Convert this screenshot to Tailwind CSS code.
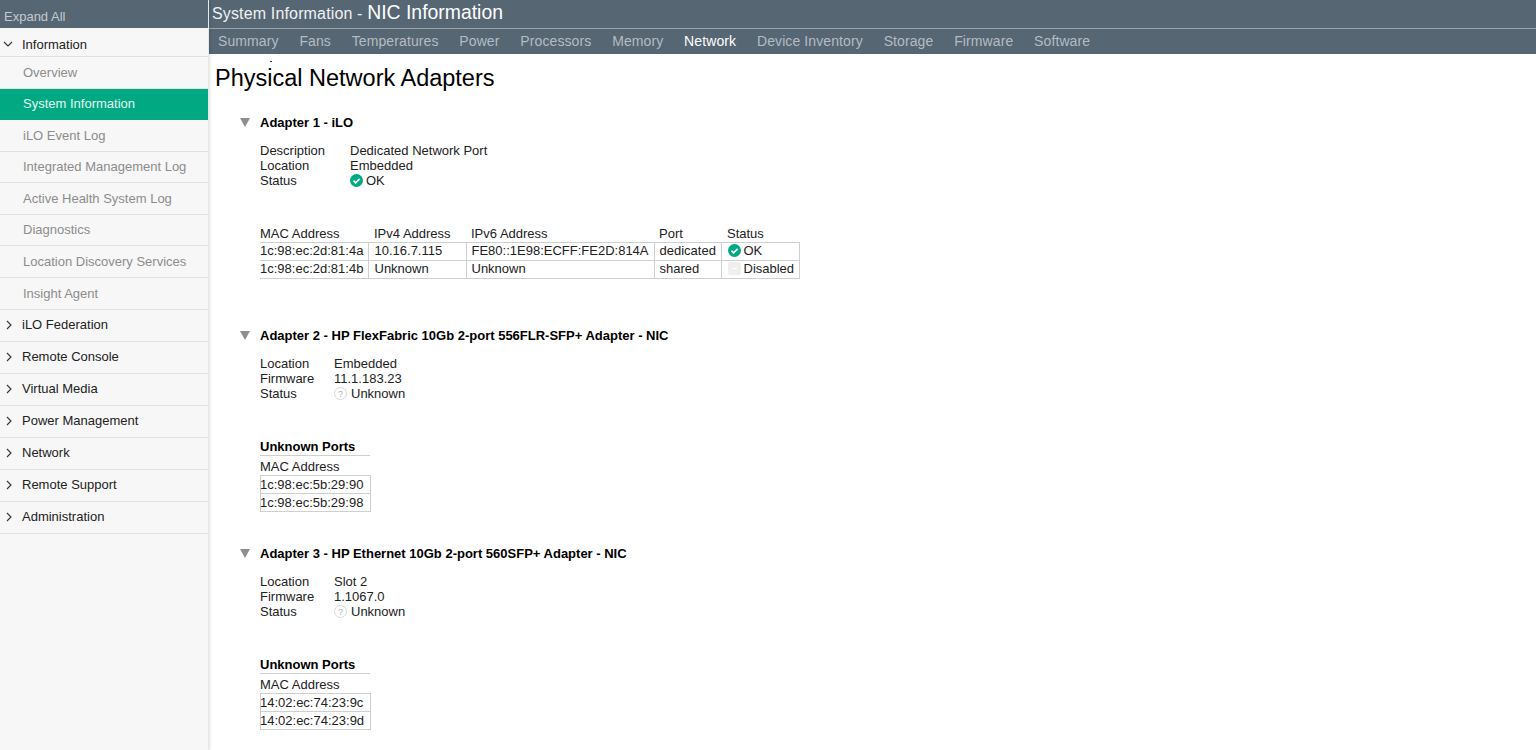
<!DOCTYPE html>
<html lang="en">
<head>
  <meta charset="UTF-8">
  <title>System Information - NIC Information</title>
  <script src="https://cdn.jsdelivr.net/npm/@tailwindcss/browser@4"></script>
</head>
<body class="bg-white text-black font-['Liberation_Sans',Arial,sans-serif] overflow-hidden">
  <div class="flex h-[750px]">
    <!-- left nav -->
    <aside class="w-[209px] shrink-0 bg-[#f7f7f7] border-r border-[#e8e8e8] shadow-[1px_0_3px_rgba(0,0,0,0.12)] z-10 text-[13px] leading-[15px]">
      <div class="h-[28px] bg-[#566673] text-[#c4cacf] pl-[4px] pt-[9px]">Expand All</div>
      <div class="h-[28px] mt-px pt-[3px] box-border border-b border-[#e0e0e0] flex items-center text-[#222]">
        <svg class="w-[22px] shrink-0" height="10" viewBox="0 0 22 10"><path d="M4 3l4 4 4-4" fill="none" stroke="#333" stroke-width="1.1"/></svg>
        <span>Information</span>
      </div>
      <div class="h-[32px] pl-[23px] pb-px flex items-center border-b border-[#e0e0e0] text-[#8c8c8c]">Overview</div>
      <div class="h-[31px] pl-[23px] pb-[2px] flex items-center bg-[#01a982] text-[#e6f6f2]">System Information</div>
      <div class="h-[32px] pl-[23px] pb-px flex items-center border-b border-[#e0e0e0] text-[#8c8c8c]">iLO Event Log</div>
      <div class="h-[31px] pl-[23px] pb-px flex items-center border-b border-[#e0e0e0] text-[#8c8c8c]">Integrated Management Log</div>
      <div class="h-[32px] pl-[23px] pb-px flex items-center border-b border-[#e0e0e0] text-[#8c8c8c]">Active Health System Log</div>
      <div class="h-[31px] pl-[23px] pb-px flex items-center border-b border-[#e0e0e0] text-[#8c8c8c]">Diagnostics</div>
      <div class="h-[32px] pl-[23px] pb-px flex items-center border-b border-[#e0e0e0] text-[#8c8c8c]">Location Discovery Services</div>
      <div class="h-[32px] pl-[23px] pb-px flex items-center border-b border-[#e0e0e0] text-[#8c8c8c]">Insight Agent</div>
      <div class="h-[32px] pb-[2px] flex items-center border-b border-[#e0e0e0] text-[#222]"><svg class="w-[22px] shrink-0" height="12" viewBox="0 0 22 12"><path d="M7 2l4 4-4 4" fill="none" stroke="#333" stroke-width="1.1"/></svg><span>iLO Federation</span></div>
      <div class="h-[32px] pb-[2px] flex items-center border-b border-[#e0e0e0] text-[#222]"><svg class="w-[22px] shrink-0" height="12" viewBox="0 0 22 12"><path d="M7 2l4 4-4 4" fill="none" stroke="#333" stroke-width="1.1"/></svg><span>Remote Console</span></div>
      <div class="h-[32px] pb-[2px] flex items-center border-b border-[#e0e0e0] text-[#222]"><svg class="w-[22px] shrink-0" height="12" viewBox="0 0 22 12"><path d="M7 2l4 4-4 4" fill="none" stroke="#333" stroke-width="1.1"/></svg><span>Virtual Media</span></div>
      <div class="h-[32px] pb-[2px] flex items-center border-b border-[#e0e0e0] text-[#222]"><svg class="w-[22px] shrink-0" height="12" viewBox="0 0 22 12"><path d="M7 2l4 4-4 4" fill="none" stroke="#333" stroke-width="1.1"/></svg><span>Power Management</span></div>
      <div class="h-[32px] pb-[2px] flex items-center border-b border-[#e0e0e0] text-[#222]"><svg class="w-[22px] shrink-0" height="12" viewBox="0 0 22 12"><path d="M7 2l4 4-4 4" fill="none" stroke="#333" stroke-width="1.1"/></svg><span>Network</span></div>
      <div class="h-[32px] pb-[2px] flex items-center border-b border-[#e0e0e0] text-[#222]"><svg class="w-[22px] shrink-0" height="12" viewBox="0 0 22 12"><path d="M7 2l4 4-4 4" fill="none" stroke="#333" stroke-width="1.1"/></svg><span>Remote Support</span></div>
      <div class="h-[32px] pb-[2px] flex items-center border-b border-[#e0e0e0] text-[#222]"><svg class="w-[22px] shrink-0" height="12" viewBox="0 0 22 12"><path d="M7 2l4 4-4 4" fill="none" stroke="#333" stroke-width="1.1"/></svg><span>Administration</span></div>
    </aside>

    <main class="flex-1 min-w-0">
      <div class="h-[28px] bg-[#566673] border-b border-[#9aa3aa] box-content text-white pl-[3px] flex items-center">
        <span class="text-[16px] tracking-[0.15px] text-[#f0f2f3]">System Information -&nbsp;</span><span class="text-[19.4px] mb-[3px]">NIC Information</span>
      </div>
      <nav class="h-[25px] bg-[#566673] pl-[9px] flex items-center gap-[20.8px] text-[14px] tracking-[0.1px] text-[#b4bcc2]">
        <span>Summary</span><span>Fans</span><span>Temperatures</span><span>Power</span><span>Processors</span><span>Memory</span><span class="text-white">Network</span><span>Device Inventory</span><span>Storage</span><span>Firmware</span><span>Software</span>
      </nav>

      <div class="pl-[6px]">
        <div class="ml-[55px] mt-[7px] h-px w-[2px] bg-[#444]"></div>
        <h1 class="text-[23.5px] leading-[28px] mt-[2px]">Physical Network Adapters</h1>
      </div>

      <section class="text-[13px] leading-[15px] text-[#222]">
        <div class="flex items-center h-[16px] mt-[22px] ml-[31px]">
          <svg width="10" height="9" viewBox="0 0 10 9"><path d="M0 0h10L5 9z" fill="#8f8f8f"/></svg>
          <h2 class="ml-[10px] font-bold text-[13px] text-black">Adapter 1 - iLO</h2>
        </div>
        <div class="ml-[51px] mt-[13px] grid grid-cols-[90px_1fr]">
          <span>Description</span><span>Dedicated Network Port</span>
          <span>Location</span><span>Embedded</span>
          <span>Status</span>
          <span class="flex items-center gap-[3px]"><svg width="13" height="13" viewBox="0 0 13 13"><circle cx="6.5" cy="6.5" r="6.5" fill="#01a982"/><path d="M3.5 6.7l2.1 2.1 4-4" fill="none" stroke="#fff" stroke-width="1.7"/></svg>OK</span>
        </div>
        <table class="ml-[51px] mt-[37px] border-collapse table-fixed w-[539px]">
          <thead>
            <tr class="h-[17px] text-left"><th class="font-normal p-0 w-[108px]">MAC Address</th><th class="font-normal p-0 pl-[6px] w-[98px]">IPv4 Address</th><th class="font-normal p-0 pl-[5px] w-[188px]">IPv6 Address</th><th class="font-normal p-0 pl-[5px] w-[67px]">Port</th><th class="font-normal p-0 pl-[6px] w-[78px]">Status</th></tr>
          </thead>
          <tbody>
            <tr class="h-[18px]"><td class="border-y border-[#cfcfcf] pb-px">1c:98:ec:2d:81:4a</td><td class="border border-[#cfcfcf] pl-[6px] pb-px">10.16.7.115</td><td class="border border-[#cfcfcf] pl-[5px] pb-px">FE80::1E98:ECFF:FE2D:814A</td><td class="border border-[#cfcfcf] pl-[5px] pb-px">dedicated</td><td class="border border-[#cfcfcf] pl-[6px] pb-px"><span class="flex items-center gap-[3px]"><svg width="13" height="13" viewBox="0 0 13 13"><circle cx="6.5" cy="6.5" r="6.5" fill="#01a982"/><path d="M3.5 6.7l2.1 2.1 4-4" fill="none" stroke="#fff" stroke-width="1.7"/></svg>OK</span></td></tr>
            <tr class="h-[18px]"><td class="border-y border-[#cfcfcf] pb-px">1c:98:ec:2d:81:4b</td><td class="border border-[#cfcfcf] pl-[6px] pb-px">Unknown</td><td class="border border-[#cfcfcf] pl-[5px] pb-px">Unknown</td><td class="border border-[#cfcfcf] pl-[5px] pb-px">shared</td><td class="border border-[#cfcfcf] pl-[6px] pb-px"><span class="flex items-center gap-[3px]"><svg width="13" height="13" viewBox="0 0 13 13"><rect width="13" height="13" rx="2" fill="#efefef"/><path d="M4 6.5h5" stroke="#fff" stroke-width="1.2"/></svg>Disabled</span></td></tr>
          </tbody>
        </table>
      </section>

      <section class="text-[13px] leading-[15px] text-[#222]">
        <div class="flex items-center h-[16px] mt-[49px] ml-[31px]">
          <svg width="10" height="9" viewBox="0 0 10 9"><path d="M0 0h10L5 9z" fill="#8f8f8f"/></svg>
          <h2 class="ml-[10px] font-bold text-[13px] text-black">Adapter 2 - HP FlexFabric 10Gb 2-port 556FLR-SFP+ Adapter - NIC</h2>
        </div>
        <div class="ml-[51px] mt-[12px] grid grid-cols-[74px_1fr]">
          <span>Location</span><span>Embedded</span>
          <span>Firmware</span><span>11.1.183.23</span>
          <span>Status</span>
          <span class="flex items-center gap-[4px]"><svg width="13" height="13" viewBox="0 0 13 13"><circle cx="6.5" cy="6.5" r="6" fill="none" stroke="#d8d8d8"/><text x="6.5" y="9.5" text-anchor="middle" font-size="9" fill="#b0b0b0">?</text></svg>Unknown</span>
        </div>
        <div class="ml-[51px] mt-[38px] w-[110px] font-bold text-[13px] text-black border-b border-[#cfcfcf] h-[17px]">Unknown Ports</div>
        <div class="ml-[51px] h-[19px] pt-[3px] flex items-center">MAC Address</div>
        <div class="ml-[51px] w-[111px] border border-[#cfcfcf] h-[19px] flex items-center indent-[-1px]">1c:98:ec:5b:29:90</div>
        <div class="ml-[51px] w-[111px] border border-t-0 border-[#cfcfcf] h-[18px] flex items-center indent-[-1px]">1c:98:ec:5b:29:98</div>
      </section>

      <section class="text-[13px] leading-[15px] text-[#222]">
        <div class="flex items-center h-[16px] mt-[34px] ml-[31px]">
          <svg width="10" height="9" viewBox="0 0 10 9"><path d="M0 0h10L5 9z" fill="#8f8f8f"/></svg>
          <h2 class="ml-[10px] font-bold text-[13px] text-black">Adapter 3 - HP Ethernet 10Gb 2-port 560SFP+ Adapter - NIC</h2>
        </div>
        <div class="ml-[51px] mt-[12px] grid grid-cols-[74px_1fr]">
          <span>Location</span><span>Slot 2</span>
          <span>Firmware</span><span>1.1067.0</span>
          <span>Status</span>
          <span class="flex items-center gap-[4px]"><svg width="13" height="13" viewBox="0 0 13 13"><circle cx="6.5" cy="6.5" r="6" fill="none" stroke="#d8d8d8"/><text x="6.5" y="9.5" text-anchor="middle" font-size="9" fill="#b0b0b0">?</text></svg>Unknown</span>
        </div>
        <div class="ml-[51px] mt-[38px] w-[110px] font-bold text-[13px] text-black border-b border-[#cfcfcf] h-[17px]">Unknown Ports</div>
        <div class="ml-[51px] h-[19px] pt-[3px] flex items-center">MAC Address</div>
        <div class="ml-[51px] w-[111px] border border-[#cfcfcf] h-[19px] flex items-center indent-[-1px]">14:02:ec:74:23:9c</div>
        <div class="ml-[51px] w-[111px] border border-t-0 border-[#cfcfcf] h-[18px] flex items-center indent-[-1px]">14:02:ec:74:23:9d</div>
      </section>
    </main>
  </div>
</body>
</html>
